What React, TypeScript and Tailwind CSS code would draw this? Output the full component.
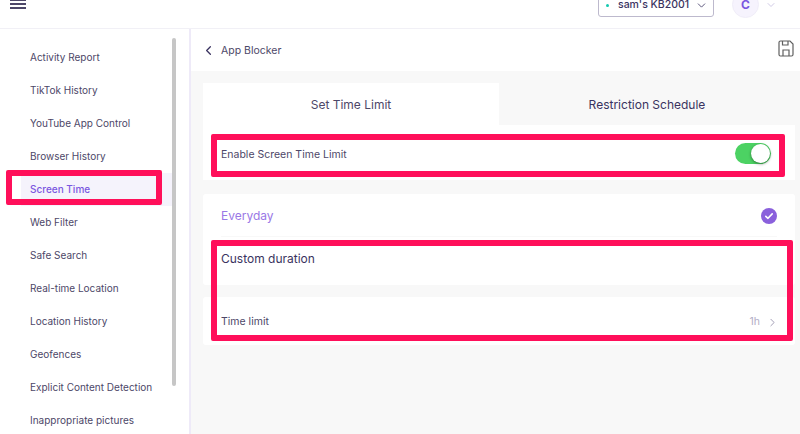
import { ChevronDown, ChevronLeft, ChevronRight } from 'lucide-react';

const navItems = [
  'Activity Report',
  'TikTok History',
  'YouTube App Control',
  'Browser History',
  'Screen Time',
  'Web Filter',
  'Safe Search',
  'Real-time Location',
  'Location History',
  'Geofences',
  'Explicit Content Detection',
  'Inappropriate pictures',
];

function TopBar() {
  return (
    <header className="flex h-[29px] shrink-0 items-start overflow-hidden border-b border-[#f1f0f6] bg-white">
      <div className="ml-[10px] mt-[-1px] flex w-[16px] flex-col gap-[2px]">
        <span className="h-[2px] w-full bg-[#4d4768]" />
        <span className="h-[2px] w-full bg-[#4d4768]" />
        <span className="h-[2px] w-full bg-[#4d4768]" />
      </div>
      <div className="ml-auto mt-[-13px] flex h-[30px] w-[116px] items-center rounded-[3px] border border-[#bdb9cd] pl-[7px] pr-[5px] pt-[6px]">
        <span className="h-[3px] w-[3px] rounded-full bg-[#14c9b0]" />
        <span className="ml-[9px] whitespace-nowrap text-[10.500px] font-medium leading-[10px] text-[#3a3360]">sam's KB2001</span>
        <ChevronDown className="ml-auto text-[#3a3360]" size={13} strokeWidth={1.5} />
      </div>
      <div className="ml-[18px] mr-[6px] mt-[-9px] flex h-[27px] w-[27px] items-end justify-center rounded-full border border-[#f0edf8] bg-[#f6f3fd] pb-[8px] text-[12px] font-bold leading-[9px] text-[#7b57e0]">
        C
      </div>
      <ChevronDown className="mr-[23px] mt-[-1px] text-[#c0b8dc]" size={12} strokeWidth={1.5} />
    </header>
  );
}

function Sidebar() {
  return (
    <aside className="relative flex w-[191px] shrink-0 justify-between overflow-hidden border-r-2 border-[#eeeaf8] bg-white">
      <nav className="flex w-[173px] flex-col pl-[21px] pt-[12px]">
        {navItems.map((item) => {
          const active = item === 'Screen Time';
          return (
            <div
              key={item}
              className={
                active
                  ? 'flex h-[33px] shrink-0 items-center bg-[#f5f3fc] pl-[9px] text-[10px] font-medium text-[#7b57e0]'
                  : 'flex h-[33px] shrink-0 items-center pl-[9px] text-[10px] text-[#4d4768]'
              }
            >
              {item}
            </div>
          );
        })}
      </nav>
      <div className="mr-[13px] mt-[9px] h-[348px] w-[4px] rounded-full bg-[#c6c6c6]" />
    </aside>
  );
}

function SaveIcon() {
  return (
    <svg width="16" height="17" viewBox="0 0 16 17" fill="none" stroke="#5f5f5f" strokeWidth="1.2">
      <path d="M2.5 1h9.5l3 3v10.5a1.5 1.5 0 0 1-1.5 1.5h-11A1.5 1.5 0 0 1 1 14.500V2.500A1.500 1.500 0 0 1 2.500 1z" />
      <path d="M4.500 1v4h5.500V1" />
      <path d="M5 16v-6h6v6" />
    </svg>
  );
}

function CheckBadge() {
  return (
    <span className="flex h-[16px] w-[16px] items-center justify-center rounded-full bg-[#8a60dc]">
      <svg width="10" height="10" viewBox="0 0 10 10" fill="none" stroke="#ffffff" strokeWidth="1.600" strokeLinecap="round" strokeLinejoin="round">
        <path d="M1.800 5.300l2.200 2 4.200-4.400" />
      </svg>
    </span>
  );
}

function MainPanel() {
  return (
    <main className="flex min-w-0 flex-1 flex-col bg-[#f8f8f8]">
      <div className="flex h-[42px] shrink-0 items-center bg-white pl-[10px] pr-[6px]">
        <ChevronLeft className="mt-[1px] text-[#3a3360]" size={15} strokeWidth={2} />
        <span className="ml-[5px] mt-[1px] text-[10.500px] text-[#4d4768]">App Blocker</span>
        <span className="ml-auto mt-[-4px]">
          <SaveIcon />
        </span>
      </div>

      <div className="ml-[12px] mr-[5px] mt-[12px] flex flex-col">
        <div className="flex h-[42px]">
          <div className="flex w-[296px] items-center justify-center bg-white pt-[1px] text-[12px] text-[#4d4768]">
            Set Time Limit
          </div>
          <div className="flex flex-1 items-center justify-center pt-[1px] text-[12px] text-[#3a3360]">
            Restriction Schedule
          </div>
        </div>

        <div className="flex h-[55px] items-center bg-white pl-[18px] pr-[24px]">
          <span className="mt-[4px] text-[10.500px] text-[#4d4768]">Enable Screen Time Limit</span>
          <div className="ml-auto mt-[1px] flex h-[21px] w-[36px] items-center justify-end rounded-full bg-[#4cd263] pr-[1px]">
            <span className="h-[19px] w-[19px] rounded-full bg-white shadow-[0_1px_3px_rgba(0,0,0,0.45)]" />
          </div>
        </div>

        <div className="mt-[14px] flex h-[91px] flex-col rounded-[3px] bg-white px-[18px]">
          <div className="flex h-[43px] shrink-0 items-center justify-between border-b border-[#f8f8f8] pt-[1px]">
            <span className="text-[12px] text-[#9a78e6]">Everyday</span>
            <CheckBadge />
          </div>
          <div className="mt-[14px] text-[12px] leading-[16px] text-[#3a3360]">Custom duration</div>
        </div>

        <div className="mt-[12px] flex h-[48px] items-end justify-between rounded-[3px] bg-white pb-[15px] pl-[18px] pr-[16px]">
          <span className="text-[10.500px] leading-[16px] text-[#4d4768]">Time limit</span>
          <span className="flex items-center text-[10.500px] leading-[16px] text-[#b3aec6]">
            1h
            <ChevronRight className="ml-[6px] text-[#8f8aa6]" size={13} strokeWidth={1.5} />
          </span>
        </div>
      </div>
    </main>
  );
}

export default function App() {
  return (
    <div className="relative flex h-[434px] w-[800px] flex-col overflow-hidden bg-white font-['Inter',sans-serif]">
      <TopBar />
      <div className="flex min-h-0 flex-1">
        <Sidebar />
        <MainPanel />
      </div>

      {/* red annotation boxes drawn over the page */}
      <div className="absolute left-[6px] top-[170px] h-[35px] w-[156px] rounded-[2px] border-[6px] border-[#ff0f5a]" />
      <div className="absolute left-[211px] top-[134px] h-[43px] w-[574px] rounded-[2px] border-[6px] border-[#ff0f5a]" />
      <div className="absolute left-[211px] top-[240px] h-[101px] w-[582px] rounded-[2px] border-[6px] border-[#ff0f5a]" />
    </div>
  );
}
